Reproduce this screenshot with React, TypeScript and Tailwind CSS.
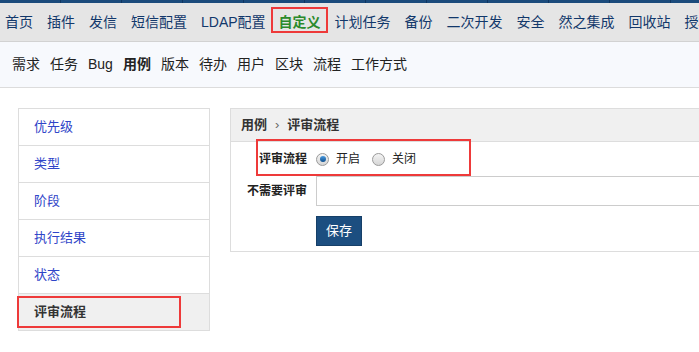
import React from 'react'

const font = { fontFamily: '"Liberation Sans", "Noto Sans CJK SC", sans-serif' }

const mainNav = ['首页', '插件', '发信', '短信配置', 'LDAP配置', '自定义', '计划任务', '备份', '二次开发', '安全', '然之集成', '回收站', '授权']
const subNav = ['需求', '任务', 'Bug', '用例', '版本', '待办', '用户', '区块', '流程', '工作方式']
const sideItems = ['优先级', '类型', '阶段', '执行结果', '状态', '评审流程']

function Radio({ checked }: { checked?: boolean }) {
  return (
    <span className="relative inline-flex h-[13px] w-[13px] items-center justify-center rounded-full border border-[#9a9a9a] bg-gradient-to-b from-[#f4f4f4] to-[#d6d6d6]">
      {checked && <span className="h-[6px] w-[6px] rounded-full bg-gradient-to-b from-[#4a9be0] to-[#0d4f8e]" />}
    </span>
  )
}

export default function App() {
  return (
    <div className="h-[352px] w-[699px] overflow-hidden bg-white" style={font}>
      {/* top strip */}
      <div className="flex h-[3px] bg-[#1b4b7c]">
        {Array.from({ length: 12 }).map((_, i) => (
          <div key={i} className="h-full w-[61px] shrink-0 border-r border-[#0f3560]" />
        ))}
      </div>

      {/* main nav */}
      <div className="flex h-[39px] whitespace-nowrap border-b border-[#d2d2d2] bg-[#e5e5e5] pl-[5px] text-[14px] text-[#12386b]">
        {mainNav.map((t) => (
          <span key={t} className={'relative mr-[14px] flex h-full shrink-0 items-center' + (t === '自定义' ? ' ml-[-1px] font-bold text-[#2b8a2b]' : '')}>
            {t}
            {t === '自定义' && <span className="absolute left-[-8px] right-[-7px] top-[4px] h-[26px] border-2 border-[#ee3a3a]" />}
          </span>
        ))}
      </div>

      {/* sub nav */}
      <div className="flex h-[46px] items-center whitespace-nowrap border-b border-[#dcdcdc] bg-[#f7f9fd] pl-[12px] text-[14px] text-[#222]">
        {subNav.map((t) => (
          <span key={t} className={'mr-[10px] shrink-0' + (t === '用例' ? ' font-bold' : '')}>{t}</span>
        ))}
      </div>

      <div className="flex items-start pl-[18px] pt-[20px]">
        {/* sidebar */}
        <div className="w-[192px] shrink-0 border border-[#dddddd] text-[13px]">
          {sideItems.map((t, i) => {
            const active = t === '评审流程'
            const last = i === sideItems.length - 1
            return (
              <div key={t} className={'relative flex items-center pl-[15px] ' + (last ? 'h-[36px] ' : 'h-[37px] border-b border-[#dddddd] ') + (active ? 'bg-[#f0f0f0] font-bold text-[#333]' : 'text-[#2f45c8]')}>
                {t}
                {active && <span className="absolute left-[-2px] top-[2px] h-[32px] w-[164px] border-2 border-[#ee3a3a]" />}
              </div>
            )
          })}
        </div>

        {/* panel */}
        <div className="ml-[20px] w-[500px] shrink-0 border border-[#dddddd]">
          <div className="flex h-[33px] items-center border-b border-[#dddddd] bg-[#f0f0f0] pl-[10px] text-[13px] font-bold text-[#333]">
            用例<span className="mx-[8px] font-normal text-[#666]">›</span>评审流程
          </div>
          <div className="grid grid-cols-[85px_1fr] pb-[5px] text-[12px] text-[#222]">
            <div className="flex h-[34px] items-center justify-end pr-[9px] font-bold">评审流程</div>
            <div className="relative flex h-[34px] items-center">
              <Radio checked />
              <span className="ml-[7px]">开启</span>
              <span className="ml-[12px] flex"><Radio /></span>
              <span className="ml-[7px]">关闭</span>
              <span className="absolute left-[-60px] top-[-3px] h-[37px] w-[215px] border-2 border-[#ee3a3a]" />
            </div>
            <div className="flex h-[30px] items-center justify-end pr-[9px] font-bold">不需要评审</div>
            <div className="h-[30px] border border-[#cccccc] bg-white" />
            <div />
            <div className="mt-[10px]">
              <button className="flex h-[30px] w-[46px] items-center justify-center border border-[#163f68] bg-[#1c4e80] text-[13px] text-white">保存</button>
            </div>
          </div>
        </div>
      </div>
    </div>
  )
}
